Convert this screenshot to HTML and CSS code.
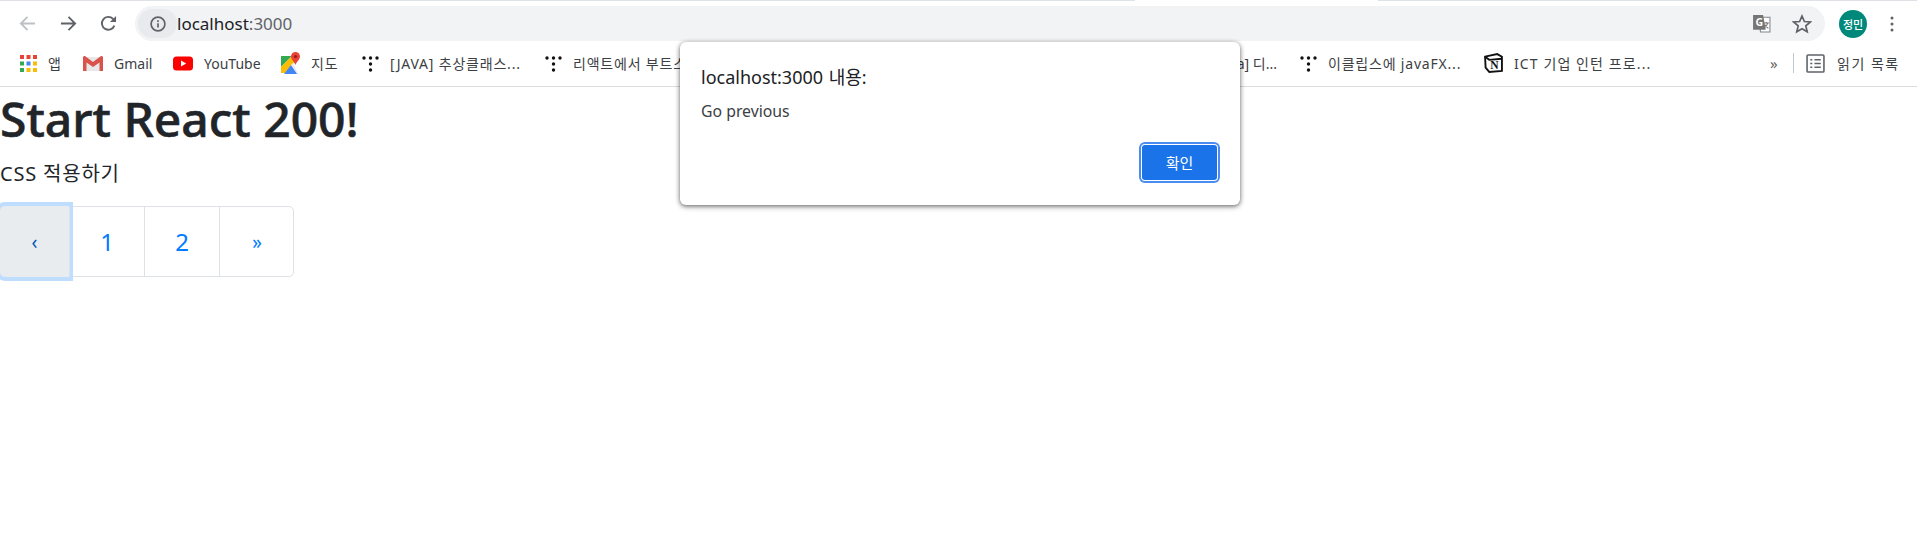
FILE: index.html
```html
<!DOCTYPE html>
<html lang="ko">
<head>
    <meta charset="UTF-8">
    <title>Start React 200!</title>
    <link rel="stylesheet" href="styles.css">
</head>
<body>
    <header class="browser">
        <div class="tabline"><span class="tabline-part tabline-left"></span><span class="tabline-part tabline-right"></span></div>
        <div class="toolbar">
            <svg class="nav-icon nav-back" viewBox="0 0 18 18"><path d="M17 9H2M9 2 2 9l7 7"/></svg>
            <svg class="nav-icon nav-forward" viewBox="0 0 18 18"><path d="M1 9h15M9 2l7 7-7 7"/></svg>
            <svg class="nav-icon nav-reload" viewBox="0 0 18 18"><path d="M15.2 11.2A6.8 6.8 0 1 1 13.8 4.2L16 6.4"/><path class="fill" d="M17 1v6.5h-6.5z"/></svg>
            <div class="omnibox">
                <span class="site-chip">
                    <svg class="info-icon" viewBox="0 0 16 16"><circle cx="8" cy="8" r="6.9"/><path d="M8 7.2v4.4M8 4.2v1.7"/></svg>
                </span>
                <span class="url">localhost<span class="url-port">:3000</span></span>
                <svg class="translate-icon" viewBox="0 0 18 18">
                    <path class="translate-back" d="M7 3h10v14H8z"/>
                    <path class="translate-front" d="M1 1h9.500l2.500 14H1z"/>
                    <text class="translate-g" x="3.200" y="11">G</text>
                    <path class="translate-x" d="M11 8.500h5M13.500 7.500v1M15 8.500c-.5 2-1.800 3.800-3.600 5M12 10c.8 1.500 2 2.700 3.500 3.500"/>
                </svg>
                <svg class="star-icon" viewBox="0 0 20 20"><path d="m10 2 2.400 5.500 6 .5-4.600 3.900 1.400 5.900L10 14.800l-5.200 3 1.400-5.900L1.600 8l6-.5z"/></svg>
            </div>
            <span class="avatar">정민</span>
            <svg class="menu-icon" viewBox="0 0 4 16"><circle cx="2" cy="2" r="1.500"/><circle cx="2" cy="8" r="1.500"/><circle cx="2" cy="14" r="1.500"/></svg>
        </div>
        <nav class="bookmarks">
            <a class="bookmark">
                <svg class="bm-icon" viewBox="0 0 17 17">
                    <rect width="4" height="4" fill="#ea4335"/><rect x="6.500" width="4" height="4" fill="#ea4335"/><rect x="13" width="4" height="4" fill="#ea4335"/>
                    <rect y="6.500" width="4" height="4" fill="#34a853"/><rect x="6.500" y="6.500" width="4" height="4" fill="#4285f4"/><rect x="13" y="6.500" width="4" height="4" fill="#fbbc05"/>
                    <rect y="13" width="4" height="4" fill="#34a853"/><rect x="6.500" y="13" width="4" height="4" fill="#fbbc05"/><rect x="13" y="13" width="4" height="4" fill="#fbbc05"/>
                </svg>
                <span class="ko">앱</span>
            </a>
            <a class="bookmark">
                <svg class="bm-icon bm-wide" viewBox="0 0 20 15">
                    <path fill="#e8e8e8" d="M1 1h18v14H1z"/>
                    <path fill="#d9534a" d="M0 1.500C0 .3 1.300-.4 2.300.3L10 6l7.700-5.700c1-.7 2.300 0 2.300 1.200V15h-3.500V6.500L10 11 3.500 6.500V15H0z"/>
                </svg>
                <span>Gmail</span>
            </a>
            <a class="bookmark">
                <svg class="bm-icon bm-wide" viewBox="0 0 20 14"><rect width="20" height="14" rx="3.500" fill="#f00"/><path fill="#fff" d="m8 4 5.200 3L8 10z"/></svg>
                <span>YouTube</span>
            </a>
            <a class="bookmark">
                <svg class="bm-icon bm-maps" viewBox="0 0 19 22">
                    <path fill="#34a853" d="M0 4h11L0 15z"/>
                    <path fill="#fbbc05" d="M11 4h2l3 3L4 21H0v-6z"/>
                    <path fill="#4285f4" d="M3 22 10 13l7 9z"/>
                    <path fill="#e8eaed" d="m10 13 2-2 5 11h-1z"/>
                    <path fill="#ea4335" d="M14.500 0a4.500 4.500 0 0 1 4.500 4.500c0 3-3 4.500-4.500 8.500-1.500-4-4.500-5.500-4.500-8.500A4.500 4.500 0 0 1 14.500 0z"/>
                    <circle cx="14.500" cy="4.500" r="1.600" fill="#9b1c12"/>
                </svg>
                <span class="ko">지도</span>
            </a>
            <a class="bookmark">
                <svg class="bm-icon dots-icon" viewBox="0 0 17 17"><circle cx="2" cy="3" r="1.700"/><circle cx="8.500" cy="3" r="1.700"/><circle cx="15" cy="3" r="1.700"/><circle cx="8.500" cy="9" r="1.700"/><circle cx="8.500" cy="15" r="1.700"/></svg>
                <span class="ko">[JAVA] 추상클래스...</span>
            </a>
            <a class="bookmark">
                <svg class="bm-icon dots-icon" viewBox="0 0 17 17"><circle cx="2" cy="3" r="1.700"/><circle cx="8.500" cy="3" r="1.700"/><circle cx="15" cy="3" r="1.700"/><circle cx="8.500" cy="9" r="1.700"/><circle cx="8.500" cy="15" r="1.700"/></svg>
                <span class="ko">리액트에서 부트스트랩...</span>
            </a>
            <a class="bookmark bookmark-tail">
                <span>[Java] 디...</span>
            </a>
            <a class="bookmark">
                <svg class="bm-icon dots-icon" viewBox="0 0 17 17"><circle cx="2" cy="3" r="1.700"/><circle cx="8.500" cy="3" r="1.700"/><circle cx="15" cy="3" r="1.700"/><circle cx="8.500" cy="9" r="1.700"/><circle cx="8.500" cy="15" r="1.700"/></svg>
                <span class="ko">이클립스에 javaFX...</span>
            </a>
            <a class="bookmark">
                <svg class="bm-icon notion-icon" viewBox="0 0 18 19">
                    <path class="notion-page" d="M1 3.500 12.500 1 17 3.500V17L5 18 1.500 14z"/>
                    <path class="notion-top" d="M1 3.500 5 6.500 17 5.500"/>
                    <text class="notion-n" x="6" y="15.500">N</text>
                </svg>
                <span class="ko ko-wide">ICT 기업 인턴 프로...</span>
            </a>
            <a class="bookmark-more">»</a>
            <span class="bookmarks-sep"></span>
            <a class="bookmark">
                <svg class="bm-icon reading-icon" viewBox="0 0 18 18"><rect x="1" y="1" width="16" height="16" rx="1"/><path d="M4 5.500h2M8 5.500h6M4 9h2M8 9h6M4 12.500h2M8 12.500h6"/></svg>
                <span class="ko ko-reading">읽기 목록</span>
            </a>
        </nav>
    </header>

    <main class="content">
        <h1 class="title">Start React 200!</h1>
        <p class="lead">CSS 적용하기</p>
        <ul class="pagination">
            <li class="page-item page-focus"><a class="page-link page-small">‹</a></li>
            <li class="page-item"><a class="page-link">1</a></li>
            <li class="page-item"><a class="page-link">2</a></li>
            <li class="page-item"><a class="page-link page-small">»</a></li>
        </ul>
    </main>

    <div class="alert-dialog">
        <div class="alert-title">localhost:3000 <span class="alert-title-ko">내용:</span></div>
        <div class="alert-message">Go previous</div>
        <div class="alert-actions"><button class="alert-ok">확인</button></div>
    </div>
</body>
</html>
```

FILE: styles.css
```css
* {
    box-sizing: border-box;
}
html, body {
    margin: 0;
    height: 100%;
    background: #fff;
    overflow: hidden;
}
body {
    font-family: "Noto Sans", "Noto Sans CJK KR", sans-serif;
    color: #212529;
}

/* browser chrome */
.browser {
    height: 87px;
    border-bottom: 1px solid #dadce0;
}
.tabline {
    display: flex;
    justify-content: space-between;
    height: 1px;
}
.tabline-part {
    background: #dee1e6;
}
.tabline-left {
    width: 1135px;
}
.tabline-right {
    width: 539px;
}
.toolbar {
    display: flex;
    align-items: center;
    height: 35px;
    margin-top: 5px;
    padding-left: 19px;
}
.nav-icon {
    width: 17px;
    height: 17px;
    fill: none;
    stroke: #5f6368;
    stroke-width: 2;
    flex: none;
}
.nav-back {
    stroke: #bdc1c6;
}
.nav-forward {
    margin-left: 24px;
}
.nav-reload {
    margin-left: 23px;
}
.nav-reload .fill {
    fill: #5f6368;
    stroke: none;
}
.omnibox {
    display: flex;
    align-items: center;
    width: 1690px;
    height: 35px;
    margin-left: 18px;
    padding-left: 3px;
    border-radius: 18px;
    background: #f1f3f4;
}
.site-chip {
    display: flex;
    align-items: center;
    justify-content: center;
    width: 39px;
    height: 29px;
    border-radius: 15px;
    background: #e8eaed;
    flex: none;
}
.info-icon {
    width: 16px;
    height: 16px;
    fill: none;
    stroke: #5f6368;
    stroke-width: 1.700;
}
.url {
    font-size: 17px;
    color: #202124;
}
.url-port {
    color: #5f6368;
}
.translate-icon {
    width: 19px;
    height: 19px;
    margin-left: auto;
}
.translate-back {
    fill: #fff;
    stroke: #80868b;
    stroke-width: 1;
}
.translate-front {
    fill: #757575;
}
.translate-g {
    font-size: 10px;
    font-weight: 700;
    fill: #fff;
}
.translate-x {
    fill: none;
    stroke: #757575;
    stroke-width: 1;
}
.star-icon {
    width: 20px;
    height: 20px;
    margin-left: 21px;
    margin-right: 13px;
    fill: none;
    stroke: #5f6368;
    stroke-width: 1.700;
}
.avatar {
    display: flex;
    align-items: center;
    justify-content: center;
    width: 28px;
    height: 28px;
    margin-left: 14px;
    border-radius: 50%;
    background: #00897b;
    color: #fff;
    font-size: 11px;
    font-weight: 500;
    flex: none;
}
.menu-icon {
    width: 4px;
    height: 16px;
    margin-left: 23px;
    fill: #5f6368;
    flex: none;
}

.bookmarks {
    display: grid;
    grid-template-columns: 63px 90px 108px 81px 183px 573px 182px 184px 286px 23px 13px auto;
    align-items: center;
    height: 36px;
    margin-top: 4px;
    padding-left: 20px;
    font-size: 14px;
    color: #3c4043;
}
.bookmark {
    display: flex;
    align-items: center;
    gap: 11px;
    white-space: nowrap;
    overflow: hidden;
}
.ko {
    letter-spacing: 0.8px;
}
.ko-wide {
    letter-spacing: 1.100px;
}
.ko-reading {
    margin-left: 1px;
    letter-spacing: 1.500px;
}
.bookmark-tail {
    justify-content: flex-end;
    padding-right: 23px;
}
.bm-icon {
    width: 17px;
    height: 17px;
    flex: none;
}
.bm-wide {
    width: 20px;
}
.bm-maps {
    width: 19px;
    height: 22px;
}
.dots-icon {
    fill: #111;
}
.notion-icon {
    width: 19px;
    height: 20px;
}
.notion-page {
    fill: #fff;
    stroke: #111;
    stroke-width: 1.800;
}
.notion-top {
    fill: none;
    stroke: #111;
    stroke-width: 1.800;
}
.notion-n {
    font-family: "Liberation Serif", serif;
    font-size: 11px;
    font-weight: 700;
    fill: #111;
}
.bookmark-more {
    font-size: 15px;
    color: #5f6368;
}
.bookmarks-sep {
    width: 1px;
    height: 20px;
    background: #c4c7ca;
}
.reading-icon {
    width: 19px;
    height: 19px;
    fill: none;
    stroke: #5f6368;
    stroke-width: 1.500;
}

/* page */
.title {
    margin: 0;
    font-size: 48px;
    line-height: 64px;
    font-weight: 500;
    -webkit-text-stroke: 0.6px #212529;
}
.lead {
    margin: 8px 0 17px;
    font-size: 20px;
    line-height: 30px;
    letter-spacing: 0.8px;
}
.pagination {
    display: grid;
    grid-template-columns: 68px 75px 75px 75px;
    width: 294px;
    height: 71px;
    margin: 0;
    padding: 0;
    list-style: none;
    border: 1px solid #dee2e6;
    border-radius: 5px;
}
.page-item {
    display: flex;
    border-left: 1px solid #dee2e6;
}
.page-item:first-child {
    border-left: 0;
}
.page-link {
    flex: 1;
    display: flex;
    align-items: center;
    justify-content: center;
    color: #007bff;
    font-size: 24px;
}
.page-small {
    font-size: 19px;
}
.page-focus {
    margin: -1px 0 -1px -1px;
    background: #e9ecef;
    border-radius: 5px 0 0 5px;
    box-shadow: 0 0 0 4px #bfdeff;
}
.page-focus .page-link {
    color: #0056b3;
}

/* alert */
.alert-dialog {
    position: absolute;
    left: 680px;
    top: 42px;
    width: 560px;
    height: 163px;
    padding: 21px 21px;
    background: #fff;
    border-radius: 6px;
    box-shadow: 0 1px 4px rgba(0, 0, 0, 0.5), 0 2px 6px rgba(0, 0, 0, 0.2);
}
.alert-title {
    font-size: 18px;
    line-height: 28px;
    color: #202124;
}
.alert-title-ko {
    font-size: 18px;
    margin-left: 1px;
}
.alert-message {
    margin-top: 9px;
    font-size: 15.800px;
    line-height: 22px;
    color: #3c4043;
}
.alert-actions {
    display: flex;
    justify-content: flex-end;
    margin-top: 20px;
    margin-right: -1px;
}
.alert-ok {
    width: 75px;
    height: 35px;
    margin: 3px;
    border: 0;
    border-radius: 3px;
    background: #1a73e8;
    color: #fff;
    font-family: inherit;
    font-size: 15px;
    box-shadow: 0 0 0 1px #fff, 0 0 0 3px #4a8cf0;
}
```
